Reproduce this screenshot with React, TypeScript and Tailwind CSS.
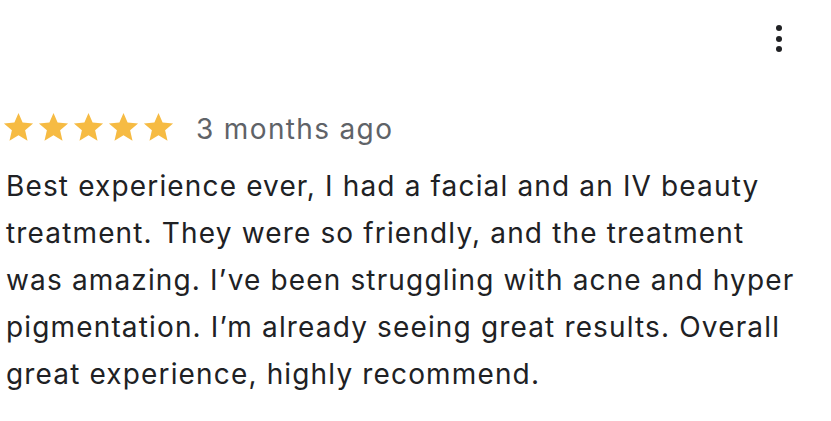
import React from "react";

const Star = () => (
  <svg width="35" height="35" viewBox="0 0 24 24" className="shrink-0">
    <path
      fill="#F6BB43"
      d="M12 17.27L18.18 21l-1.64-7.03L22 9.24l-7.19-.61L12 2 9.19 8.63 2 9.24l5.46 4.73L5.82 21z"
    />
  </svg>
);

export default function App() {
  const lines = [
    "Best experience ever, I had a facial and an IV beauty",
    "treatment. They were so friendly, and the treatment",
    "was amazing. I\u2019ve been struggling with acne and hyper",
    "pigmentation. I\u2019m already seeing great results. Overall",
    "great experience, highly recommend.",
  ];
  return (
    <div
      className="w-[831px] h-[421px] bg-white relative overflow-hidden"
      style={{ fontFamily: "Inter, Roboto, sans-serif" }}
    >
      <div className="flex justify-end pt-[25px] pr-[49px]">
        <div className="flex flex-col items-center gap-[4.5px]">
          <span className="block w-[6px] h-[6px] rounded-full bg-[#202124]" />
          <span className="block w-[6px] h-[6px] rounded-full bg-[#202124]" />
          <span className="block w-[6px] h-[6px] rounded-full bg-[#202124]" />
        </div>
      </div>
      <div className="pl-[3px] pt-[55px]">
        <div className="flex items-center h-[40px]">
          <div className="flex -ml-[2px]">
            <Star />
            <Star />
            <Star />
            <Star />
            <Star />
          </div>
          <span className="ml-[20px] pt-[4px] text-[28px] tracking-[1.35px] text-[#5f6368]">3 months ago</span>
        </div>
        <div className="mt-[16px] pl-[3px] text-[28px] leading-[47px] tracking-[1.15px] text-[#202124]">
          {lines.map((l, i) => (
            <div key={i} className="whitespace-nowrap">
              {l}
            </div>
          ))}
        </div>
      </div>
    </div>
  );
}
